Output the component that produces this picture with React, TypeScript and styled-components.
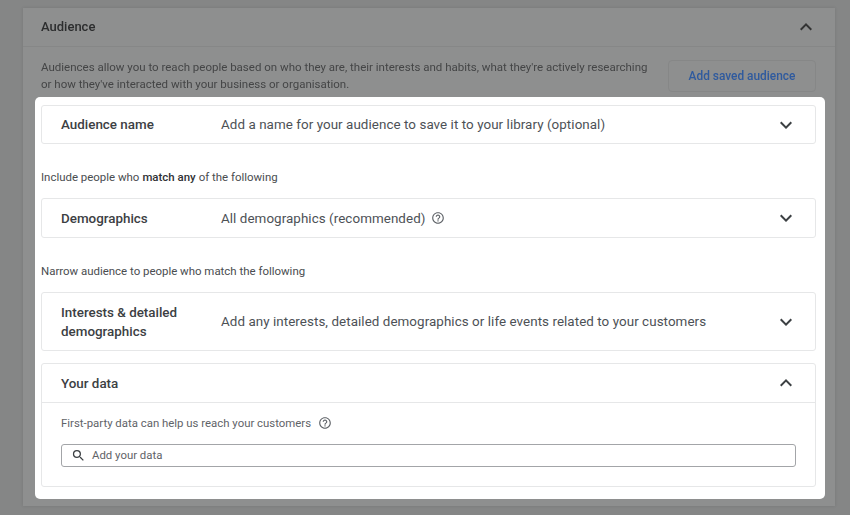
import { ReactNode } from "react";
import styled, { createGlobalStyle } from "styled-components";
import {
  MdExpandLess,
  MdExpandMore,
  MdHelpOutline,
  MdSearch,
} from "react-icons/md";

const GlobalStyle = createGlobalStyle`
  html, body {
    margin: 0;
    padding: 0;
    background: #858686;
  }
  body {
    font-family: Roboto, "Liberation Sans", sans-serif;
  }
`;

const Page = styled.div`
  position: relative;
  width: 850px;
  height: 515px;
  overflow: hidden;
  box-sizing: border-box;
  padding: 8px 15px 8px 23px;
  background: #858686;
`;

const BackCard = styled.section`
  height: 498px;
  background: #8e8f8f;
  box-shadow: 0 0 3px rgba(0, 0, 0, 0.12);
  filter: blur(0.7px);
`;

const BackHeader = styled.header`
  display: flex;
  align-items: center;
  justify-content: space-between;
  height: 38px;
  padding: 0 17px 0 18px;
  border-bottom: 1px solid #868787;
`;

const BackTitle = styled.h2`
  margin: 0;
  padding-bottom: 2px;
  font-size: 13px;
  font-weight: 500;
  color: #2c2d2e;
`;

const BackBody = styled.div`
  display: flex;
  justify-content: space-between;
  padding: 12px 19px 0 18px;
`;

const BackText = styled.p`
  margin: 0;
  width: 610px;
  font-size: 11.5px;
  line-height: 17px;
  color: #444546;
`;

const SavedButton = styled.div`
  display: flex;
  align-items: center;
  justify-content: center;
  width: 146px;
  height: 30px;
  margin-top: 1px;
  border: 1px solid #868787;
  border-radius: 4px;
  font-size: 11.9px;
  font-weight: 500;
  color: #2f5a9e;
`;

const Panel = styled.main`
  position: absolute;
  left: 35px;
  top: 97px;
  width: 790px;
  height: 402px;
  box-sizing: border-box;
  padding: 8px 9px 0 6px;
  background: #fff;
  border-radius: 5px;
`;

const RowCard = styled.div<{ $height: number }>`
  display: flex;
  align-items: center;
  box-sizing: border-box;
  height: ${(p) => p.$height}px;
  padding: 0 17px 0 19px;
  border: 1px solid #e6e7e8;
  border-radius: 3px;
`;

const RowTitle = styled.div`
  flex: 0 0 160px;
  font-size: 13.4px;
  font-weight: 500;
  line-height: 19px;
  color: #3c4043;
`;

const RowValue = styled.div`
  display: flex;
  flex: 1;
  align-items: center;
  gap: 6px;
  font-size: 13.4px;
  letter-spacing: 0.06px;
  color: #4d5156;
`;

const Caption = styled.p`
  display: flex;
  align-items: center;
  box-sizing: border-box;
  height: 54px;
  margin: 0;
  padding-top: 12px;
  font-size: 11.45px;
  color: #4a4d50;

  b {
    font-weight: 500;
    color: #2f3134;
    margin: 0 3px;
  }
`;

const DataCard = styled.div`
  height: 124px;
  margin-top: 12px;
  box-sizing: border-box;
  border: 1px solid #e6e7e8;
  border-radius: 3px;
`;

const DataHeader = styled.div`
  display: flex;
  align-items: center;
  justify-content: space-between;
  height: 38px;
  padding: 0 17px 0 19px;
  border-bottom: 1px solid #e6e7e8;
`;

const DataBody = styled.div`
  padding: 13px 19px 0 19px;
`;

const DataLabel = styled.div`
  display: flex;
  align-items: center;
  gap: 7px;
  height: 14px;
  font-size: 11.4px;
  color: #5f6368;
`;

const SearchBox = styled.div`
  display: flex;
  align-items: center;
  gap: 6px;
  box-sizing: border-box;
  height: 23px;
  margin-top: 14px;
  padding: 0 9px 1px;
  border: 1px solid #a3a5a8;
  border-radius: 3px;
  font-size: 11.4px;
  color: #5f6368;
`;

const Chevron = styled.span`
  display: flex;
  color: #3c4043;
`;

function AudienceRow({
  title,
  height,
  children,
}: {
  title: ReactNode;
  height: number;
  children: ReactNode;
}) {
  return (
    <RowCard $height={height}>
      <RowTitle>{title}</RowTitle>
      <RowValue>{children}</RowValue>
      <Chevron>
        <MdExpandMore size={24} />
      </Chevron>
    </RowCard>
  );
}

export default function App() {
  return (
    <Page>
      <GlobalStyle />
      <BackCard>
        <BackHeader>
          <BackTitle>Audience</BackTitle>
          <MdExpandLess size={24} color="#333" />
        </BackHeader>
        <BackBody>
          <BackText>
            Audiences allow you to reach people based on who they are, their
            interests and habits, what they're actively researching or how
            they've interacted with your business or organisation.
          </BackText>
          <SavedButton>Add saved audience</SavedButton>
        </BackBody>
      </BackCard>
      <Panel>
        <AudienceRow title="Audience name" height={39}>
          Add a name for your audience to save it to your library (optional)
        </AudienceRow>
        <Caption>
          Include people who <b>match any</b> of the following
        </Caption>
        <AudienceRow title="Demographics" height={40}>
          All demographics (recommended)
          <MdHelpOutline size={14} color="#5f6368" />
        </AudienceRow>
        <Caption>Narrow audience to people who match the following</Caption>
        <AudienceRow
          title={
            <>
              Interests &amp; detailed
              <br />
              demographics
            </>
          }
          height={59}
        >
          Add any interests, detailed demographics or life events related to
          your customers
        </AudienceRow>
        <DataCard>
          <DataHeader>
            <RowTitle>Your data</RowTitle>
            <Chevron>
              <MdExpandLess size={24} />
            </Chevron>
          </DataHeader>
          <DataBody>
            <DataLabel>
              First-party data can help us reach your customers
              <MdHelpOutline size={14} color="#5f6368" />
            </DataLabel>
            <SearchBox>
              <MdSearch size={15} color="#3c4043" />
              Add your data
            </SearchBox>
          </DataBody>
        </DataCard>
      </Panel>
    </Page>
  );
}
